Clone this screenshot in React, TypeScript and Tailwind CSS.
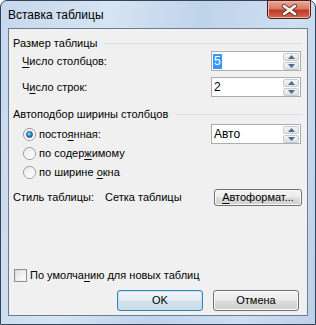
import React from "react";

const U = ({ children }: { children: React.ReactNode }) => (
  <span className="underline underline-offset-[2px] decoration-1">{children}</span>
);

function SpinArrows() {
  return (
    <div className="flex flex-col gap-[1px] w-[16px] py-[0px]">
      <div className="h-[8px] rounded-[2px] border border-[#c9cdd2] bg-[linear-gradient(#f6f6f6,#e3e3e3)] flex items-center justify-center">
        <svg width="7" height="4" viewBox="0 0 7 4"><path d="M0 4 L3.5 0 L7 4 Z" fill="#4d6a93" /></svg>
      </div>
      <div className="h-[8px] rounded-[2px] border border-[#c9cdd2] bg-[linear-gradient(#f2f2f2,#dfdfdf)] flex items-center justify-center">
        <svg width="7" height="4" viewBox="0 0 7 4"><path d="M0 0 L3.5 4 L7 0 Z" fill="#4d6a93" /></svg>
      </div>
    </div>
  );
}

function Spinner({ value, selected }: { value: string; selected?: boolean }) {
  return (
    <div className="w-[90px] h-[20px] border border-[#abadb3] bg-white flex items-center pl-[1px] pr-[1px] py-[1px] text-[12px]">
      <div className="flex-1 flex items-center h-full">
        {selected ? (
          <span className="bg-[#3399ff] text-white leading-[15px] px-[1px]">{value}</span>
        ) : (
          <span className="leading-[15px] px-[1px]">{value}</span>
        )}
      </div>
      <SpinArrows />
    </div>
  );
}

function Radio({ checked }: { checked?: boolean }) {
  return (
    <div className="w-[13px] h-[13px] rounded-full border border-[#8e9296] bg-[linear-gradient(135deg,#d6d6d6,#fbfbfb)] flex items-center justify-center shrink-0">
      <div className="w-[11px] h-[11px] rounded-full bg-[linear-gradient(135deg,#e9e9e9,#ffffff)] flex items-center justify-center">
        {checked && (
          <div className="w-[7px] h-[7px] rounded-full border border-[#1c4e7c] bg-[radial-gradient(circle_at_40%_35%,#a9e3ff,#2a8fd6_50%,#11518a)]" />
        )}
      </div>
    </div>
  );
}

function Header({ children }: { children: React.ReactNode }) {
  return (
    <div className="h-[14px] flex items-center gap-[7px]">
      <span className="whitespace-nowrap">{children}</span>
      <div className="flex-1 h-px bg-[#d5dfe5]" />
    </div>
  );
}

function Btn({ children, def, w, h }: { children: React.ReactNode; def?: boolean; w: string; h: string }) {
  return (
    <div
      className={`${w} ${h} rounded-[3px] border flex items-center justify-center ${
        def
          ? "border-[#3c7fb1] bg-[linear-gradient(#eef4f8_0%,#e4edf3_48%,#d3e1ea_52%,#c9d9e4_100%)] shadow-[inset_0_0_0_1px_#bfe4f9]"
          : "border-[#707070] bg-[linear-gradient(#f4f4f4_0%,#ebebeb_48%,#dddddd_52%,#cfcfcf_100%)] shadow-[inset_0_0_0_1px_#fbfbfb]"
      }`}
    >
      {children}
    </div>
  );
}

export default function App() {
  return (
    <div className="w-[316px] h-[325px] font-['Liberation_Sans',sans-serif] text-[11px] text-black">
      <div className="w-full h-full flex flex-col rounded-t-[7px] border border-[#33455a] bg-[linear-gradient(100deg,#c5d8ec_0%,#d6e4f3_30%,#bfd3ea_55%,#cddff1_80%,#bcd0e8_100%)]">
        <div className="h-[27px] flex items-start justify-between pl-[7px] pr-[4px] shrink-0">
          <span className="mt-[6px] text-[12px] leading-[16px] text-black">Вставка таблицы</span>
          <div className="mt-[-1px] w-[44px] h-[19px] rounded-b-[4px] border border-[#4a1f1a] bg-[linear-gradient(#e9a998_0%,#d97a66_45%,#c0392b_55%,#d5674a_100%)] shadow-[inset_0_0_0_1px_#f0b7a8] flex items-center justify-center">
            <svg width="15" height="12" viewBox="0 0 15 12">
              <path d="M2 2 L13 10 M13 2 L2 10" stroke="#6b3a33" strokeWidth="4.2" strokeLinecap="round" />
              <path d="M2 2 L13 10 M13 2 L2 10" stroke="#ffffff" strokeWidth="2.4" strokeLinecap="round" />
            </svg>
          </div>
        </div>
        <div className="mx-[7px] flex-1 border border-[#6a7d92] bg-[#f0f0f0] flex flex-col pl-[4px] pr-[5px] pt-[7px] pb-[4px]">
          <Header>Размер таблицы</Header>
          <div className="mt-[1px] h-[20px] flex items-center pr-[1px]">
            <span className="flex-1 pl-[9px]"><U>Ч</U>исло столбцов:</span>
            <Spinner value="5" selected />
          </div>
          <div className="mt-[6px] h-[20px] flex items-center pr-[1px]">
            <span className="flex-1 pl-[9px]">Ч<U>и</U>сло строк:</span>
            <Spinner value="2" />
          </div>
          <div className="mt-[10px]">
            <Header>Автоподбор ширины столбцов</Header>
          </div>
          <div className="mt-[3px] h-[20px] flex items-center pr-[1px]">
            <div className="flex-1 flex items-center gap-[3px] pl-[10px]">
              <Radio checked />
              <span>посто<U>я</U>нная:</span>
            </div>
            <Spinner value="Авто" />
          </div>
          <div className="h-[19px] flex items-center gap-[3px] pl-[10px]">
            <Radio />
            <span>по содер<U>ж</U>имому</span>
          </div>
          <div className="h-[19px] flex items-center gap-[3px] pl-[10px]">
            <Radio />
            <span>по ширине <U>о</U>кна</span>
          </div>
          <div className="mt-[7px] h-[17px] flex items-center">
            <span className="w-[92px]">Стиль таблицы:</span>
            <span className="flex-1">Сетка таблицы</span>
            <Btn w="w-[88px]" h="h-[17px]">
              <span><U>А</U>втоформат...</span>
            </Btn>
          </div>
          <div className="flex-1" />
          <div className="h-[13px] flex items-center gap-[3px] pl-[1px]">
            <div className="w-[13px] h-[13px] border border-[#8e9296] bg-[linear-gradient(135deg,#d4d4d4,#fbfbfb)] p-[1px]">
              <div className="w-full h-full bg-[linear-gradient(135deg,#e2e2e2,#ffffff)]" />
            </div>
            <span>По умолча<U>н</U>ию для новых таблиц</span>
          </div>
          <div className="mt-[8px] flex justify-end gap-[10px] pr-[3px]">
            <Btn def w="w-[86px]" h="h-[21px]">OK</Btn>
            <Btn w="w-[86px]" h="h-[21px]">Отмена</Btn>
          </div>
        </div>
        <div className="h-[8px] shrink-0" />
      </div>
    </div>
  );
}
